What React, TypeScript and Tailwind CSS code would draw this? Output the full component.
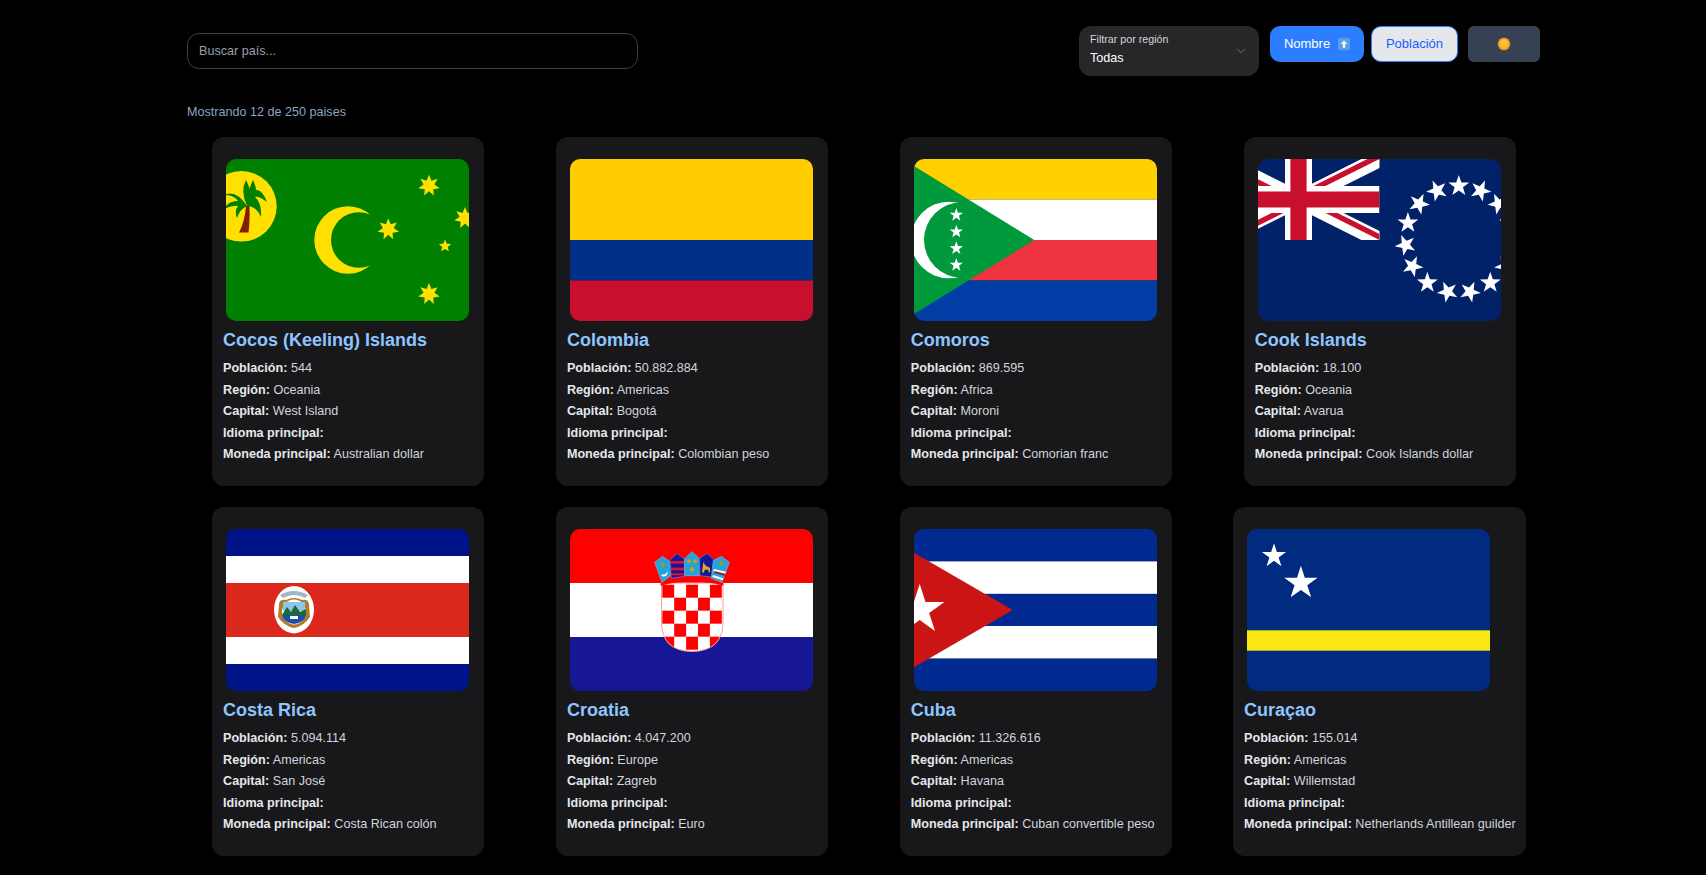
import React, { ReactNode } from "react";
import { ChevronDown } from "lucide-react";

// star polygon points around a centre, first point straight up
const starPoints = (cx: number, cy: number, r: number, n = 5, inner = 0.4, rot = 0) => {
    const pts: string[] = []
    for (let i = 0; i < n * 2; i++) {
        const a = ((-90 + rot + (i * 180) / n) * Math.PI) / 180
        const rad = i % 2 === 0 ? r : r * inner
        pts.push((cx + rad * Math.cos(a)).toFixed(2) + "," + (cy + rad * Math.sin(a)).toFixed(2))
    }
    return pts.join(" ")
}

const Svg = ({ children }: { children: ReactNode }) => (
    <svg viewBox="0 0 243 162" className="block w-full h-full">{children}</svg>
)

const FlagCocos = () => (
    <Svg>
        <rect width="243" height="162" fill="#008000" />
        <circle cx="15.4" cy="47.3" r="35.3" fill="#ffe000" />
        <path d="M13 73.5 Q19 62 20 47 L23.5 47 Q24 62 22.5 73.5 Z" fill="#802000" />
        <path d="M21 47 Q10 30 -2 36 Q8 36 12 42 Q2 42 -2 50 Q8 46 12 47 Q8 52 11 59 Q14 50 21 47 Z" fill="#008000" />
        <path d="M21 47 Q22 30 27 21 Q30 27 30 31 Q36 30 41 43 Q33 37 29 38 Q36 44 35 58 Q30 47 21 47 Z" fill="#008000" />
        <path d="M21 47 Q14 32 20 21 Q24 28 25 36 Z" fill="#008000" />
        <circle cx="122" cy="81" r="33.7" fill="#ffe000" />
        <circle cx="132.8" cy="81" r="27.8" fill="#008000" />
        <polygon points={starPoints(203, 26.7, 11, 7, 0.5)} fill="#ffe000" />
        <polygon points={starPoints(162.3, 70.3, 11, 7, 0.5)} fill="#ffe000" />
        <polygon points={starPoints(239, 59, 11, 7, 0.5)} fill="#ffe000" />
        <polygon points={starPoints(219, 87, 6.5, 5, 0.45)} fill="#ffe000" />
        <polygon points={starPoints(203, 135, 11, 7, 0.5)} fill="#ffe000" />
    </Svg>
)

const FlagColombia = () => (
    <Svg>
        <rect width="243" height="81" fill="#ffcd00" />
        <rect y="81" width="243" height="40.5" fill="#003087" />
        <rect y="121.5" width="243" height="40.5" fill="#c8102e" />
    </Svg>
)

const FlagComoros = () => (
    <Svg>
        <rect width="243" height="40.5" fill="#ffd100" />
        <rect y="40.5" width="243" height="40.5" fill="#ffffff" />
        <rect y="81" width="243" height="40.5" fill="#ef3340" />
        <rect y="121.5" width="243" height="40.5" fill="#003da5" />
        <polygon points="0,7 120.3,81 0,155" fill="#009a3d" />
        <circle cx="35" cy="81" r="38.3" fill="#ffffff" />
        <circle cx="47.8" cy="81" r="37.8" fill="#009a3d" />
        {[56, 72.7, 89.3, 106].map((y) => (
            <polygon key={y} points={starPoints(42.3, y, 7)} fill="#ffffff" />
        ))}
    </Svg>
)

const FlagCook = () => (
    <Svg>
        <rect width="243" height="162" fill="#012169" />
        <svg x="-40.5" y="0" width="162" height="81" viewBox="0 0 60 30">
            <defs>
                <clipPath id="jack">
                    <path d="M30,15 h30 v15 z v15 h-30 z h-30 v-15 z v-15 h30 z" />
                </clipPath>
            </defs>
            <path d="M0,0 L60,30 M60,0 L0,30" stroke="#ffffff" strokeWidth="6" />
            <path d="M0,0 L60,30 M60,0 L0,30" clipPath="url(#jack)" stroke="#c8102e" strokeWidth="4" />
            <path d="M30,0 V30 M0,15 H60" stroke="#ffffff" strokeWidth="10" />
            <path d="M30,0 V30 M0,15 H60" stroke="#c8102e" strokeWidth="6" />
        </svg>
        {Array.from({ length: 15 }).map((_, i) => {
            const deg = i * 24
            const a = ((deg - 90) * Math.PI) / 180
            const cx = 200.8 + 53.5 * Math.cos(a)
            const cy = 80.5 + 53.5 * Math.sin(a)
            return <polygon key={i} points={starPoints(cx, cy, 11, 5, 0.4, deg)} fill="#ffffff" />
        })}
    </Svg>
)

const FlagCostaRica = () => (
    <Svg>
        <rect width="243" height="162" fill="#001489" />
        <rect y="27" width="243" height="108" fill="#ffffff" />
        <rect y="54" width="243" height="54" fill="#da291c" />
        <ellipse cx="68" cy="80.7" rx="20" ry="23.7" fill="#ffffff" />
        <path d="M54 66 Q68 58 82 66 L79 69 Q68 63 57 69 Z" fill="#9db8c8" />
        <path d="M53 76 Q53 70 60 71 Q68 67 76 71 Q83 70 83 76 L84 88 Q78 97 68 99 Q58 97 52 88 Z" fill="#b07a2c" />
        <ellipse cx="68" cy="83" rx="12" ry="12.5" fill="#ffffff" />
        <rect x="57" y="73" width="22" height="9" fill="#8cc6e8" />
        <path d="M56 86 L61 78 L65 83 L69 76 L74 83 L80 80 L80 87 Z" fill="#1a6b33" />
        <path d="M56 86 H80 Q78 94 68 95 Q58 94 56 86 Z" fill="#1d4fa3" />
        <rect x="64" y="87" width="8" height="3" fill="#ffffff" />
    </Svg>
)

const FlagCroatia = () => (
    <Svg>
        <rect width="243" height="54" fill="#ff0000" />
        <rect y="54" width="243" height="54" fill="#ffffff" />
        <rect y="108" width="243" height="54" fill="#171796" />
        <defs>
            <clipPath id="shield">
                <path d="M91.5 54 H153 V93 Q153 122 122 122.5 Q91.5 122 91.5 93 Z" />
            </clipPath>
        </defs>
        <g clipPath="url(#shield)">
            <rect x="91" y="54" width="63" height="70" fill="#ffffff" />
            {[0, 1, 2, 3, 4].map((row) =>
                [0, 1, 2, 3, 4].filter((col) => (row + col) % 2 === 0).map((col) => (
                    <rect key={row + "-" + col} x={92.3 + col * 11.9} y={55.7 + row * 13} width="11.9" height="13" fill="#ff0000" />
                ))
            )}
        </g>
        <path d="M91.5 54 H153 V93 Q153 122 122 122.5 Q91.5 122 91.5 93 Z" fill="none" stroke="#ff9a9a" strokeWidth="1" />
        {/* crown, drawn in zoomed coordinates */}
        <g transform="translate(70 -10) scale(0.3333)">
            <path d="M62 192 Q155 160 250 192 L250 200 Q155 175 62 200 Z" fill="#ff0000" />
            <polygon points="44,130 68,112 92,130 92,170 66,190" fill="#21a4dc" stroke="#7fb6e6" strokeWidth="2" />
            <circle cx="68" cy="138" r="7" fill="#9a9a30" />
            <path d="M64 166 Q76 170 84 156 Q82 176 66 172 Z" fill="#ffffff" />
            <polygon points="90,122 112,103 134,122 134,172 94,178" fill="#171796" stroke="#7f7fd0" strokeWidth="2" />
            <rect x="92" y="126" width="42" height="8" fill="#e01030" />
            <rect x="92" y="146" width="42" height="8" fill="#e01030" />
            <rect x="93" y="163" width="41" height="6" fill="#e01030" />
            <polygon points="134,120 155,98 178,118 178,170 134,170" fill="#21a4dc" stroke="#7fb6e6" strokeWidth="2" />
            <circle cx="147" cy="127" r="6" fill="#c8a020" />
            <circle cx="165" cy="127" r="6" fill="#c8a020" />
            <circle cx="156" cy="151" r="7" fill="#c8a020" />
            <polygon points="178,118 202,103 222,122 222,175 180,170" fill="#171796" stroke="#7f7fd0" strokeWidth="2" />
            <path d="M186 160 L190 130 L197 140 L210 146 L210 160 L206 160 L205 152 L194 152 L192 161 Z" fill="#d8b020" />
            <polygon points="220,125 244,112 268,130 246,190 214,178" fill="#21a4dc" stroke="#7fb6e6" strokeWidth="2" />
            <circle cx="244" cy="134" r="7" fill="#9a9a30" />
            <polygon points="222,150 258,158 255,166 220,158" fill="#ffffff" />
            <polygon points="224,156 256,164 254,170 222,162" fill="#a02030" />
            <polygon points="219,168 250,178 248,184 217,174" fill="#ffffff" />
        </g>
    </Svg>
)

const FlagCuba = () => (
    <Svg>
        <rect width="243" height="162" fill="#002a8f" />
        <rect y="32.4" width="243" height="32.4" fill="#ffffff" />
        <rect y="97" width="243" height="32.4" fill="#ffffff" />
        <polygon points="0,23.7 98.8,81 0,138.3" fill="#cb1515" />
        <polygon points={starPoints(5.7, 81, 26, 5, 0.382)} fill="#ffffff" />
    </Svg>
)

const FlagCuracao = () => (
    <Svg>
        <rect width="243" height="162" fill="#002b7f" />
        <rect y="101.3" width="243" height="20.4" fill="#f9e814" />
        <polygon points={starPoints(27, 27, 12.7, 5, 0.382)} fill="#ffffff" />
        <polygon points={starPoints(53.9, 54.2, 17.5, 5, 0.382)} fill="#ffffff" />
    </Svg>
)

const countries = [
    { name: "Cocos (Keeling) Islands", population: "544", region: "Oceania", capital: "West Island", currency: "Australian dollar", flag: <FlagCocos /> },
    { name: "Colombia", population: "50.882.884", region: "Americas", capital: "Bogotá", currency: "Colombian peso", flag: <FlagColombia /> },
    { name: "Comoros", population: "869.595", region: "Africa", capital: "Moroni", currency: "Comorian franc", flag: <FlagComoros /> },
    { name: "Cook Islands", population: "18.100", region: "Oceania", capital: "Avarua", currency: "Cook Islands dollar", flag: <FlagCook /> },
    { name: "Costa Rica", population: "5.094.114", region: "Americas", capital: "San José", currency: "Costa Rican colón", flag: <FlagCostaRica /> },
    { name: "Croatia", population: "4.047.200", region: "Europe", capital: "Zagreb", currency: "Euro", flag: <FlagCroatia /> },
    { name: "Cuba", population: "11.326.616", region: "Americas", capital: "Havana", currency: "Cuban convertible peso", flag: <FlagCuba /> },
    { name: "Curaçao", population: "155.014", region: "Americas", capital: "Willemstad", currency: "Netherlands Antillean guilder", flag: <FlagCuracao /> },
]

const Row = ({ label, value }: { label: string, value?: string }) => (
    <p className="text-[12.6px] leading-[19.5px] mb-[2px] whitespace-nowrap text-[#d1d5dc]">
        <strong className="font-bold text-[#e5e7eb]">{label}:</strong> {value}
    </p>
)

const CountryCard = ({ country }: { country: typeof countries[number] }) => (
    <div className="bg-[#18181b] rounded-xl min-w-[271.5px] h-[349px] px-[10.67px] pt-[22px]">
        <div className="w-[243px] h-[162px] ml-[3px] rounded-[10px] overflow-hidden">
            {country.flag}
        </div>
        <h2 className="mt-[7.5px] text-[18px] leading-[22px] font-bold text-[#8ec5ff] whitespace-nowrap">{country.name}</h2>
        <div className="mt-[8.5px]">
            <Row label="Población" value={country.population} />
            <Row label="Región" value={country.region} />
            <Row label="Capital" value={country.capital} />
            <Row label="Idioma principal" />
            <Row label="Moneda principal" value={country.currency} />
        </div>
    </div>
)

const App = () => {
    return (
        <div className="min-h-screen bg-black font-['Liberation_Sans',Arial,sans-serif]">
            <div className="w-[1353px] ml-[187px] pt-[26px]">
                <div className="flex justify-between items-center">
                    <input
                        className="w-[451px] h-[36px] px-[11px] rounded-xl border border-[#3f3f46] bg-black text-[12.6px] text-white placeholder:text-[#99a1af] outline-none"
                        placeholder="Buscar país..."
                    />
                    <div className="flex items-start">
                        <div className="relative w-[180px] h-[50px] rounded-xl bg-[#27272a] pl-[11px] pt-[7px]">
                            <div className="text-[10.7px] leading-[13px] text-[#d4d4d8]">Filtrar por región</div>
                            <div className="mt-[3px] text-[12.6px] leading-[18px] font-medium text-white">Todas</div>
                            <ChevronDown className="absolute right-[11px] top-[18px] text-[#7a7a82]" size={14} strokeWidth={1.5} />
                        </div>
                        <button className="ml-[11px] w-[94px] h-[36px] rounded-[10px] bg-[#2b7fff] text-white text-[13px] font-medium flex items-center justify-center gap-[8px]">
                            Nombre
                            <svg viewBox="0 0 12 12" className="w-[12px] h-[12px]">
                                <rect width="12" height="12" rx="1.5" fill="#5a9ee6" />
                                <path d="M6 2.2 L9.2 6 H7.2 V9.8 H4.8 V6 H2.8 Z" fill="#ffffff" />
                            </svg>
                        </button>
                        <button className="ml-[7px] w-[87px] h-[36px] rounded-[10px] bg-[#e5e7eb] border border-[#2b7fff] text-[#155dfc] text-[13px] font-medium">
                            Población
                        </button>
                        <button className="ml-[10px] w-[72px] h-[36px] rounded-md bg-[#364153] flex items-center justify-center">
                            <svg viewBox="0 0 14 14" className="w-[14px] h-[14px]">
                                <defs>
                                    <radialGradient id="sun" cx="50%" cy="42%" r="60%">
                                        <stop offset="0%" stopColor="#ffcf3a" />
                                        <stop offset="100%" stopColor="#f7a823" />
                                    </radialGradient>
                                </defs>
                                <polygon points={starPoints(7, 7, 7, 16, 0.8)} fill="#e8842a" />
                                <circle cx="7" cy="7" r="5.5" fill="url(#sun)" />
                            </svg>
                        </button>
                    </div>
                </div>
                <p className="mt-[27px] text-[12.6px] leading-[18px] text-[#8ba3c0]">Mostrando 12 de 250 paises</p>
                <div className="w-[1354px] mt-[16px] grid grid-cols-4 gap-y-[21.33px] gap-x-[21.67px] justify-items-center">
                    {countries.map((country) => (
                        <CountryCard key={country.name} country={country} />
                    ))}
                </div>
            </div>
        </div>
    )
}

export default App
